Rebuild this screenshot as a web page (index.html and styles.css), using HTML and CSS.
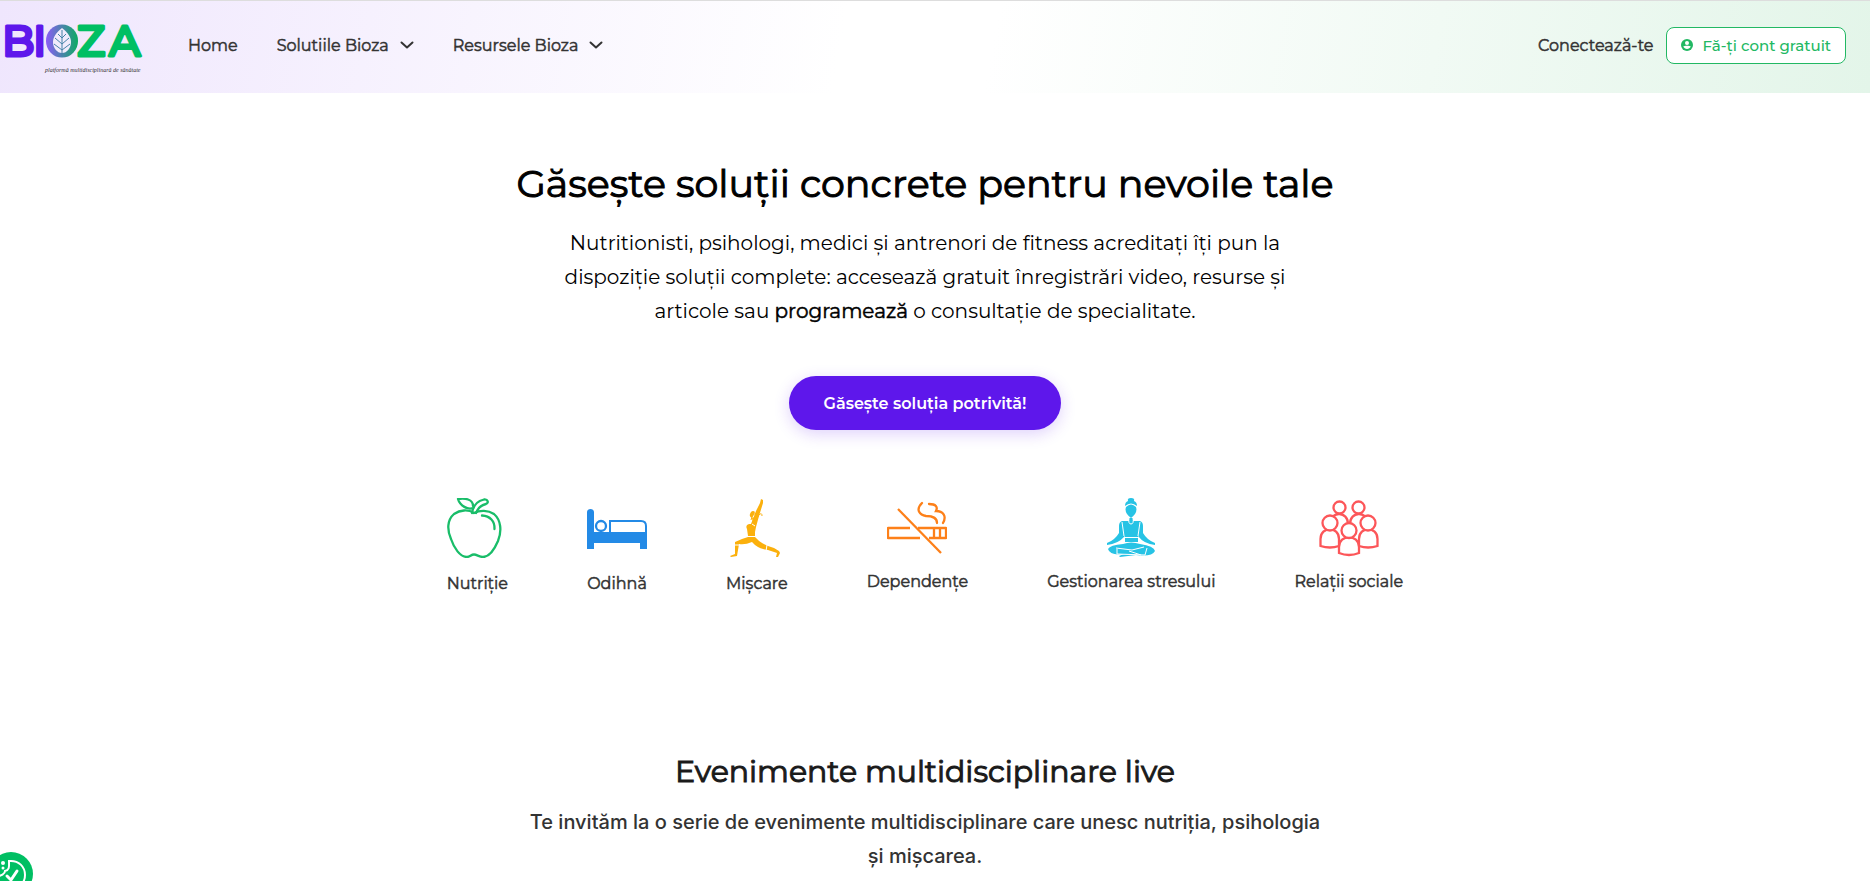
FILE: index.html
```
<!doctype html>
<html lang="ro">
<head>
	<meta charset="utf-8" />
	<meta name="viewport" content="width=device-width, initial-scale=1" />
	<title>Bioza - platformă multidisciplinară de sănătate</title>
	<link rel="stylesheet" href="styles.css">
</head>
<body>
	<header class="header">
		<a href="#" class="logo" aria-label="Bioza">
			<svg width="150" height="76" viewBox="0 -12 150 76">
				<defs>
					<linearGradient id="logo-o" x1="0" y1="0" x2="1" y2="0">
						<stop offset="0" stop-color="#8b5cf6" />
						<stop offset="1" stop-color="#0cab62" />
					</linearGradient>
				</defs>
				<g class="logo-letters">
					<text x="0" y="37" class="logo-purple">B</text>
					<text x="31" y="37" class="logo-purple">I</text>
					<text x="75" y="37" class="logo-green">Z</text>
					<text x="107" y="37" class="logo-green">A</text>
				</g>
				<!-- the O with the leaf inside -->
				<ellipse cx="60" cy="22" rx="16" ry="16.500" fill="url(#logo-o)" />
				<path d="M60 9c-6 5-9 9-9 14 0 6 4 11 9 11s9-5 9-11c0-5-3-9-9-14z" fill="#f1ebfc" />
				<path d="M60 11v26M60 19l-4-4M60 19l4-4M60 25l-7-6M60 25l7-6M60 31l-8-6M60 31l8-6" fill="none" stroke="#4682a8" stroke-width="1" />
				<text x="43" y="53" class="logo-tagline">platformă multidisciplinară de sănătate</text>
			</svg>
		</a>
		<nav class="nav">
			<a href="#">Home</a>
			<a href="#">Solutiile Bioza
				<svg width="14" height="8" viewBox="0 0 14 8"><path d="M1.500 1.500 7 6.500l5.500-5" fill="none" stroke="currentColor" stroke-width="2" stroke-linecap="round" stroke-linejoin="round" /></svg>
			</a>
			<a href="#">Resursele Bioza
				<svg width="14" height="8" viewBox="0 0 14 8"><path d="M1.500 1.500 7 6.500l5.500-5" fill="none" stroke="currentColor" stroke-width="2" stroke-linecap="round" stroke-linejoin="round" /></svg>
			</a>
		</nav>
		<div class="account">
			<a href="#" class="login">Conectează-te</a>
			<a href="#" class="signup">
				<svg width="12" height="12" viewBox="0 0 24 24">
					<circle cx="12" cy="12" r="12" fill="#22b863" />
					<circle cx="12" cy="8" r="4" fill="#fff" />
					<path d="M4.500 15c2-2 13-2 15 0-1.500 3-4 5-7.500 5s-6-2-7.500-5z" fill="#fff" />
				</svg>
				Fă-ți cont gratuit
			</a>
		</div>
	</header>

	<main class="main">
		<section class="hero">
			<h1>Găsește soluții concrete pentru nevoile tale</h1>
			<p>Nutritionisti, psihologi, medici și antrenori de fitness acreditați îți pun la<br />
				dispoziție soluții complete: accesează gratuit înregistrări video, resurse și<br />
				articole sau <strong>programează</strong> o consultație de specialitate.</p>
			<button type="button" class="cta">Găsește soluția potrivită!</button>
		</section>

		<section class="categories">
			<a href="#" class="category">
				<svg width="60" height="60" viewBox="0 0 60 60" fill="none" stroke="#19bd69" stroke-width="2.300" stroke-linecap="round" stroke-linejoin="round">
					<path d="M27 15C21 11 13 12 7 16C0 22 0 32 4 41C7 50 13 59 20 59C23 59 24 56.500 27 56.500S32 59 36 59C43 59 48 50 51 43C55 33 54 22 47 16C41 12 33 12 27 15Z" />
					<path d="M25 15C26 8 30 3 37 1.500C41 1 42 5 39 6C34 7 31 10 29 15" />
					<path d="M26 10C21 12 13 8 11 1C18 0 26 1 26 8" />
					<path d="M35 17.500C43 18 48 23 47.500 31" />
				</svg>
				<span>Nutriție</span>
			</a>
			<a href="#" class="category">
				<svg width="60" height="60" viewBox="0 0 60 60" fill="#238ae6">
					<path d="M0 14C0 10 7 10 7 14V34H60V51H53V45H7V51H0Z" />
					<circle cx="14" cy="28" r="5" fill="none" stroke="#238ae6" stroke-width="2.300" />
					<path d="M23 35V23H54Q59 23 59 28V35Z" fill="#fff" stroke="#238ae6" stroke-width="2" />
				</svg>
				<span>Odihnă</span>
			</a>
			<a href="#" class="category">
				<svg width="60" height="60" viewBox="0 0 60 60" fill="#fbb00c">
					<path d="M34 1L36 2L36 5L32 18L29 29L28 34V38H21L20 31Q18 27 22 26L24 26L29 13L33 5Z" />
					<path d="M25 20Q21 18 24 14Q26 12 28 14L25 20Q29 19 31 16L32 18Q29 23 26 24Z" />
					<path d="M32 17Q35 14 35 18M24 22Q26 14 30 16" fill="none" stroke="#fbb00c" />
					<path d="M21 39H28Q33 45 41 48L47 50L52 53L53 55L51 59H49L50 55L41 52Q31 51 25 44Q18 47 12 46L10 58L4 59L3 58L8 56L8 44Q14 41 21 39Z" />
					<path d="M8 47H13M40 47L39 53M20 38.500H29M25 26L28 28" fill="none" stroke="#fff" />
				</svg>
				<span>Mișcare</span>
			</a>
			<a href="#" class="category short">
				<svg width="60" height="60" viewBox="0 0 60 60" fill="none" stroke="#fd8019" stroke-width="2.300">
					<path d="M23 30H1V40H33M31 30H59V40H42M47 30V40M53 30V40" stroke-linejoin="round" />
					<path d="M11 11L54 55" />
					<path d="M35 5C28 12 33 17 39 18C46 18 50 20 50 25M42 6C49 6 51 9 49 13C56 13 60 18 56 25" stroke-linecap="round" />
				</svg>
				<span>Dependențe</span>
			</a>
			<a href="#" class="category short">
				<svg width="60" height="60" viewBox="0 0 60 60" fill="#27c3e5">
					<path d="M27 3Q26 0 30 0Q34 0 33 3Q36 4 36 8Q30 3 24 8Q24 4 27 3Z" />
					<path d="M25 9Q30 4 35 9Q37 15 30 20Q23 15 25 9Z" />
					<path d="M28 20H32V23H39Q42 24 42 28V35Q46 42 54 45V47Q43 46 37 38V41H24V38Q17 46 6 47V45Q14 42 18 35V28Q18 24 21 23H28Z" />
					<path d="M24 40H37V44H24Z" />
					<path d="M22 46Q30 43 39 46Q53 48 54 53Q51 59 35 57L19 59L18 58L23 56Q9 58 7 51Q9 47 22 46Z" />
					<path d="M21 24L23 38M39 24L37 38M24 39.500H37M28 20Q27 26 30 26T32 20M15 50L31 52L43 49M16 51V56L44 57L46 50M28 53L40 57" fill="none" stroke="#fff" />
				</svg>
				<span>Gestionarea stresului</span>
			</a>
			<a href="#" class="category short">
				<svg width="60" height="60" viewBox="0 0 60 60" fill="#fff" stroke="#fc5659" stroke-width="2.300">
					<path d="M12 30V24C12 13 29 13 29 26V32M31 32V26C31 13 48 13 48 24V30" />
					<circle cx="20.500" cy="9.500" r="6" /><circle cx="39.500" cy="9.500" r="6" />
					<path d="M1.500 48V41C1.500 28 20 28 20 41V48Q11 51 1.500 48ZM40 48V41C40 28 58.500 28 58.500 41V48Q49 51 40 48Z" />
					<circle cx="11" cy="25" r="7.500" /><circle cx="49" cy="25" r="7.500" />
					<path d="M20 55V49C20 36 40 36 40 49V55Q30 59 20 55Z" />
					<circle cx="30" cy="32.500" r="7.500" />
				</svg>
				<span>Relații sociale</span>
			</a>
		</section>

		<section class="events">
			<h2>Evenimente multidisciplinare live</h2>
			<p>Te invităm la o serie de evenimente multidisciplinare care unesc nutriția, psihologia<br />
				și mișcarea.</p>
		</section>
	</main>

	<button type="button" class="cookies" aria-label="Setări cookie">
		<svg width="44" height="44" viewBox="0 0 44 44" fill="none" stroke="#fff" stroke-width="2" stroke-linecap="round">
			<path d="M20 9C30 8 36 15 36 23C36 31 30 37 22 37S8 31 8 24C12 24 16 22 16 19C21 18 20 14 20 9Z" />
			<path d="M18 24L22 28L28 19" stroke-width="3" />
			<g fill="#fff" stroke="none"><circle cx="14" cy="11" r="2" /><circle cx="14" cy="16" r="1.500" /><circle cx="9" cy="16" r="1.500" /></g>
		</svg>
	</button>
</body>
</html>
```
FILE: styles.css
```
* { box-sizing: border-box; }
body { margin: 0; background: #fff; color: #333; font-family: Montserrat, Inter, sans-serif; overflow-x: hidden; }
a { color: inherit; text-decoration: none; }
h1, h2, p { margin: 0; }
svg { display: block; flex: none; }

.header { display: flex; align-items: center; padding: 6px 24px 10px 2px; border-top: 1px solid #ddd; background: linear-gradient(100deg, #efe6fd 0%, #fff 45%, #fff 53%, #e3f5e9 100%); font-size: 16px; }
.logo-letters { font-size: 43px; font-weight: 500; stroke-width: 3px; stroke-linejoin: round; }
.logo-purple { fill: #5e17eb; stroke: #5e17eb; }
.logo-green { fill: #00bf63; stroke: #00bf63; }
.logo-tagline { font-family: "Liberation Serif", serif; font-size: 6px; font-style: italic; fill: #333; }
.nav { display: flex; gap: 39px; margin-left: 36px; }
.nav a { display: flex; align-items: center; gap: 11px; }
.nav a, .login, .category, .hero strong { -webkit-text-stroke: 0.5px currentColor; }
.account { display: flex; align-items: center; gap: 12px; margin-left: auto; }
.signup { display: flex; align-items: center; gap: 10px; height: 37px; padding: 0 14px; border: 1px solid #22b863; border-radius: 8px; background: #fff; color: #22b863; font-size: 15px; font-weight: 500; }

.main { padding-right: 20px; text-align: center; }
.hero { padding-top: 67px; color: #000; }
h1 { font-size: 38px; line-height: 48px; font-weight: 400; -webkit-text-stroke: 1px currentColor; }
.hero p { margin-top: 18px; font-size: 20px; line-height: 34px; }
.hero strong { font-weight: 400; }
.cta { height: 54px; margin-top: 48px; padding: 0 35px; border: 0; border-radius: 27px; background: #5e17eb; box-shadow: 0 4px 16px rgba(94, 23, 235, 0.2); color: #fff; font-family: inherit; font-size: 16px; font-weight: 600; cursor: pointer; }

.categories { display: flex; justify-content: center; gap: 79px; margin-top: 68px; font-size: 16px; line-height: 22px; }
.category { display: flex; flex-direction: column; align-items: center; gap: 15px; }
.short { gap: 13px; }

.events { margin-top: 157px; }
h2 { font-size: 30px; line-height: 40px; font-weight: 400; color: #1a1a1a; -webkit-text-stroke: 1px currentColor; }
.events p { margin-top: 13px; font-family: Inter, sans-serif; font-size: 20px; line-height: 34px; font-weight: 500; }

.cookies { position: fixed; left: -11px; bottom: -15px; width: 44px; height: 44px; padding: 0; border: 0; border-radius: 50%; background: #00bf63; cursor: pointer; }
```
